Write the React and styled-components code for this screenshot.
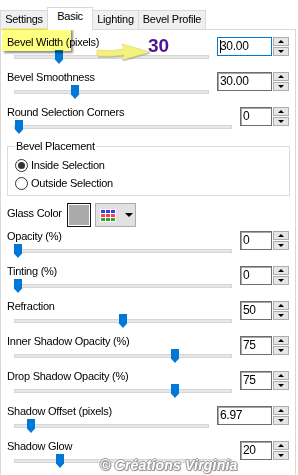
import React from 'react';
import styled, { createGlobalStyle } from 'styled-components';

const Global = createGlobalStyle`
  html, body { margin: 0; padding: 0; background: #fff; }
  body {
    font-family: "Liberation Sans", Arial, sans-serif;
    font-size: 11px;
    color: #000;
  }
  * { box-sizing: border-box; }
`;

const Page = styled.div`
  position: relative;
  width: 298px;
  height: 475px;
  overflow: hidden;
  background: #fff;
`;

const TabStrip = styled.div`
  display: flex;
  align-items: flex-end;
  height: 29px;
`;

const Tab = styled.div`
  position: relative;
  width: ${p => p.$w}px;
  height: ${p => (p.$active ? 23 : 19)}px;
  margin-bottom: ${p => (p.$active ? -1 : 0)}px;
  z-index: ${p => (p.$active ? 1 : 0)};
  background: ${p => (p.$active ? '#fff' : '#f0f0f0')};
  border: 1px solid #d9d9d9;
  border-bottom: none;
  margin-left: ${p => (p.$first ? 0 : -1)}px;
  padding-top: 2px;
  line-height: 13px;
  text-align: center;
  letter-spacing: -0.25px;
  white-space: nowrap;
`;

const Panel = styled.div`
  width: 296px;
  height: 446px;
  border: 1px solid #d9d9d9;
  border-bottom: none;
  padding-top: 5px;
`;

const Row = styled.div`
  display: flex;
  align-items: flex-start;
  height: 35px;
  padding: 0 6px;
`;

const Left = styled.div`
  flex: 1;
  min-width: 0;
  margin-right: 8px;
  display: flex;
  flex-direction: column;
`;

const Label = styled.div`
  height: 14px;
  line-height: 14px;
  white-space: nowrap;
  letter-spacing: -0.25px;
`;

const Slider = styled.div`
  position: relative;
  height: 21px;
  margin-left: 7px;
`;

const Track = styled.div`
  position: absolute;
  left: 0;
  right: 0;
  top: 6px;
  height: 4px;
  background: #e7e7e7;
  border: 1px solid #d6d6d6;
`;

const Thumb = styled.div`
  position: absolute;
  top: 1px;
  width: 8px;
  height: 14px;
  background: #0078d7;
  clip-path: polygon(0 0, 100% 0, 100% 68%, 50% 100%, 0 68%);
`;

const Spin = styled.div`
  display: flex;
  gap: 1px;
  margin-top: 2px;
`;

const Field = styled.div`
  position: relative;
  width: ${p => (p.$wide ? 55 : 32)}px;
  height: 19px;
  background: #fff;
  border: 1px solid ${p => (p.$focus ? '#0078d7' : '#6d6d6d')};
  box-shadow: ${p => (p.$focus ? 'none' : 'inset 1px 1px 0 #a5a5a5')};
  font-size: 12px;
  line-height: 17px;
  padding-left: 2px;
  letter-spacing: -0.3px;
`;

const Caret = styled.span`
  position: absolute;
  left: 2px;
  top: 2px;
  width: 1px;
  height: 13px;
  background: #000;
`;

const Buttons = styled.div`
  display: flex;
  flex-direction: column;
  gap: 1px;
  width: 16px;
`;

const SpinBtn = styled.div`
  height: 9px;
  background: #e6e6e6;
  border: 1px solid #adadad;
  display: flex;
  align-items: center;
  justify-content: center;
`;

const Arrow = styled.span`
  width: 0;
  height: 0;
  border-left: 3px solid transparent;
  border-right: 3px solid transparent;
  ${p => (p.$up ? 'border-bottom: 3px solid #000;' : 'border-top: 3px solid #000;')}
`;

const Group = styled.fieldset`
  margin: -1px 5px 0 6px;
  padding: 0 0 3px 7px;
  border: 1px solid #dcdcdc;
  min-inline-size: 0;
`;

const Legend = styled.legend`
  padding: 0 1px;
  margin-left: 0;
  line-height: 14px;
  letter-spacing: -0.25px;
`;

const Radios = styled.div`
  margin-top: 3px;
  display: flex;
  flex-direction: column;
`;

const RadioRow = styled.div`
  display: flex;
  align-items: center;
  gap: 3px;
  height: 18px;
  letter-spacing: -0.25px;
`;

const RadioCircle = styled.span`
  width: 13px;
  height: 13px;
  border-radius: 50%;
  border: 1px solid #333;
  background: #fff;
  display: flex;
  align-items: center;
  justify-content: center;
  &::after {
    content: '';
    width: 7px;
    height: 7px;
    border-radius: 50%;
    background: ${p => (p.$on ? '#333' : 'transparent')};
  }
`;

const ColorRow = styled.div`
  display: flex;
  align-items: flex-start;
  height: 24px;
  margin: 7px 0 2px;
  padding-left: 6px;
`;

const ColorLabel = styled(Label)`
  width: 60px;
  margin-top: 3px;
`;

const Swatch = styled.div`
  width: 24px;
  height: 24px;
  border: 1px solid #111;
  box-shadow: inset 0 0 0 1px #fff;
  background: #aaaaaa;
`;

const PaletteBtn = styled.div`
  margin-left: 4px;
  width: 41px;
  height: 24px;
  background: #e1e1e1;
  border: 1px solid #adadad;
  display: flex;
  align-items: center;
  padding-left: 4px;
`;

const Palette = styled.div`
  display: grid;
  grid-template-columns: repeat(3, 4px);
  grid-auto-rows: 3px;
  gap: 1px;
  padding: 1px;
  background: #fff;
`;

const Cell = styled.span`
  background: ${p => p.$c};
`;

const DropArrow = styled.span`
  margin-left: 9px;
  width: 0;
  height: 0;
  border-left: 4px solid transparent;
  border-right: 4px solid transparent;
  border-top: 4px solid #000;
`;

const Highlight = styled.div`
  position: absolute;
  left: 2px;
  top: 28px;
  width: 69px;
  height: 23px;
  background: #ffff80;
  mix-blend-mode: multiply;
  box-shadow: 2px 2px 2px rgba(0, 0, 0, 0.45);
`;

const Pointer = styled.svg`
  position: absolute;
  left: 94px;
  top: 40px;
`;

const BigValue = styled.div`
  position: absolute;
  left: 148px;
  top: 36px;
  font-size: 19px;
  font-weight: bold;
  line-height: 20px;
  color: #4b168f;
`;

const Watermark = styled.div`
  position: absolute;
  left: 100px;
  top: 458px;
  font-size: 14px;
  font-weight: bold;
  font-style: italic;
  line-height: 15px;
  letter-spacing: 0.2px;
  color: #fff;
  text-shadow: 1px 0 0 #9a9a9a, -1px 0 0 #9a9a9a, 0 1px 0 #9a9a9a, 0 -1px 0 #9a9a9a,
    1px 1px 1px #888;
  white-space: nowrap;
`;

const tabs = [
  { name: 'Settings', w: 48 },
  { name: 'Basic', w: 46, active: true },
  { name: 'Lighting', w: 47 },
  { name: 'Bevel Profile', w: 68 },
];

const rowsTop = [
  { label: 'Bevel Width (pixels)', value: '30.00', wide: true, focus: true, thumb: 59 },
  { label: 'Bevel Smoothness', value: '30.00', wide: true, thumb: 75 },
  { label: 'Round Selection Corners', value: '0', thumb: 19 },
];

const rowsBottom = [
  { label: 'Opacity (%)', value: '0', thumb: 18 },
  { label: 'Tinting (%)', value: '0', thumb: 18 },
  { label: 'Refraction', value: '50', thumb: 123 },
  { label: 'Inner Shadow Opacity (%)', value: '75', thumb: 175 },
  { label: 'Drop Shadow Opacity (%)', value: '75', thumb: 175 },
  { label: 'Shadow Offset (pixels)', value: '6.97', wide: true, thumb: 31 },
  { label: 'Shadow Glow', value: '20', thumb: 60 },
];

const palette = [
  '#3b3bf5', '#3b3bf5', '#3b3bf5',
  '#f04646', '#f04646', '#f04646',
  '#36a136', '#36a136', '#36a136',
];

function SliderRow({ r }) {
  return (
    <Row>
      <Left>
        <Label>{r.label}</Label>
        <Slider>
          <Track />
          <Thumb style={{ left: r.thumb - 18 }} />
        </Slider>
      </Left>
      <Spin>
        <Field $wide={r.wide} $focus={r.focus}>
          {r.focus && <Caret />}
          {r.value}
        </Field>
        <Buttons>
          <SpinBtn><Arrow $up /></SpinBtn>
          <SpinBtn><Arrow /></SpinBtn>
        </Buttons>
      </Spin>
    </Row>
  );
}

export default function App() {
  return (
    <Page>
      <Global />
      <TabStrip>
        {tabs.map((t, i) => (
          <Tab key={t.name} $w={t.w} $active={t.active} $first={i === 0}>
            {t.name}
          </Tab>
        ))}
      </TabStrip>
      <Panel>
        {rowsTop.map(r => <SliderRow key={r.label} r={r} />)}
        <Group>
          <Legend>Bevel Placement</Legend>
          <Radios>
            <RadioRow><RadioCircle $on />Inside Selection</RadioRow>
            <RadioRow><RadioCircle />Outside Selection</RadioRow>
          </Radios>
        </Group>
        <ColorRow>
          <ColorLabel>Glass Color</ColorLabel>
          <Swatch />
          <PaletteBtn>
            <Palette>
              {palette.map((c, i) => <Cell key={i} $c={c} />)}
            </Palette>
            <DropArrow />
          </PaletteBtn>
        </ColorRow>
        {rowsBottom.map(r => <SliderRow key={r.label} r={r} />)}
      </Panel>

      <Highlight />
      <Pointer width="60" height="22" viewBox="0 0 60 22">
        <path
          d="M3 10 Q16 12 30 9 L28 4 L56 12 L28 20 L30 15 Q16 17 3 16 Z"
          fill="#8a8a8a"
          opacity="0.5"
          transform="translate(1 1.5)"
        />
        <path
          d="M3 10 Q16 12 30 9 L28 4 L56 12 L28 20 L30 15 Q16 17 3 16 Z"
          fill="#f4f27c"
          stroke="#d8d45a"
          strokeWidth="0.6"
        />
      </Pointer>
      <BigValue>30</BigValue>
      <Watermark>© Créations Virginia</Watermark>
    </Page>
  );
}
